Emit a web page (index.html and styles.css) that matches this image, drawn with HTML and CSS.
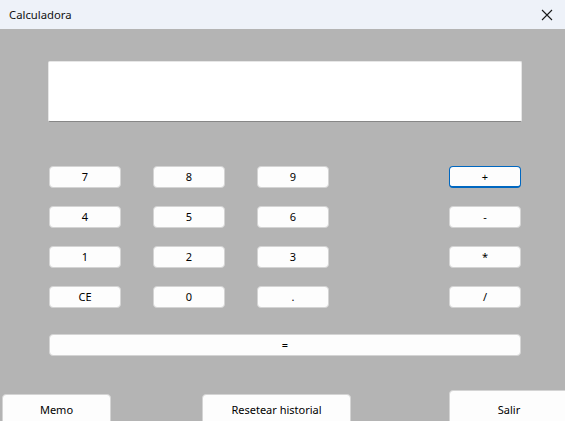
FILE: index.html
```html
<!DOCTYPE html>
<html lang="es">
<head>
<meta charset="utf-8">
<title>Calculadora</title>
<link rel="stylesheet" href="styles.css">
</head>
<body>
<div class="window">
  <header class="titlebar">
    <span class="title">Calculadora</span>
    <span class="close" aria-label="Cerrar">
      <svg width="12" height="12" viewBox="0 0 12 12"><path d="M1 1L11 11M11 1L1 11" stroke="#1a1a1a" stroke-width="1.1" fill="none"/></svg>
    </span>
  </header>
  <main class="client">
    <div class="display"></div>
    <div class="keys">
      <button class="key">7</button>
      <button class="key">8</button>
      <button class="key">9</button>
      <span class="spacer"></span>
      <button class="key focused">+</button>

      <button class="key">4</button>
      <button class="key">5</button>
      <button class="key">6</button>
      <span class="spacer"></span>
      <button class="key">-</button>

      <button class="key">1</button>
      <button class="key">2</button>
      <button class="key">3</button>
      <span class="spacer"></span>
      <button class="key">*</button>

      <button class="key">CE</button>
      <button class="key">0</button>
      <button class="key">.</button>
      <span class="spacer"></span>
      <button class="key">/</button>
    </div>
    <button class="key equals">=</button>
    <div class="bottom">
      <button class="key big memo">Memo</button>
      <button class="key big reset">Resetear historial</button>
      <button class="key big exit">Salir</button>
    </div>
  </main>
</div>
</body>
</html>
```
FILE: styles.css
```css
html, body {
  margin: 0;
  padding: 0;
  width: 565px;
  height: 421px;
  overflow: hidden;
}
body {
  font-family: "Noto Sans", "Liberation Sans", sans-serif;
  font-size: 12px;
  color: #000;
  background: #b4b4b4;
}
.window {
  display: flex;
  flex-direction: column;
  height: 421px;
}
.titlebar {
  height: 29px;
  flex: none;
  background: #eef2f9;
  display: flex;
  align-items: center;
  justify-content: space-between;
  padding: 0 12px 0 9px;
  box-sizing: border-box;
}
.title {
  font-size: 11.3px;
  color: #111;
}
.close {
  display: flex;
  width: 12px;
  height: 12px;
}
.client {
  flex: 1;
  background: #b4b4b4;
  display: flex;
  flex-direction: column;
  padding: 32px 0 0 0;
  overflow: hidden;
}
.client > * {
  flex: none;
}
.display {
  margin-left: 48px;
  width: 474px;
  height: 61px;
  box-sizing: border-box;
  background: #fff;
  border: 1px solid #e6e6e6;
  border-bottom: 1px solid #868686;
  border-radius: 2px;
}
.keys {
  margin: 44px 0 0 49px;
  display: grid;
  grid-template-columns: 72px 72px 72px 56px 72px;
  grid-auto-rows: 22px;
  column-gap: 32px;
  row-gap: 18px;
  width: 472px;
}
.key {
  font-family: "Noto Sans", "Liberation Sans", sans-serif;
  font-size: 11px;
  color: #000;
  background: #fdfdfd;
  border: 1px solid #d4d4d4;
  border-radius: 4px;
  padding: 0;
  margin: 0;
  box-sizing: border-box;
  line-height: 18px;
  text-align: center;
}
.focused {
  border: 1px solid #0067c0;
  border-bottom-width: 2px;
}
.equals {
  margin: 26px 0 0 49px;
  width: 472px;
  height: 22px;
}
.bottom {
  margin-top: 34px;
  display: flex;
  align-items: flex-start;
}
.big {
  flex: none;
  display: block;
}
.memo {
  margin: 4px 0 0 2px;
  width: 109px;
  height: 32px;
}
.reset {
  margin: 4px 0 0 91px;
  width: 149px;
  height: 32px;
}
.exit {
  margin: 0 0 0 98px;
  width: 120px;
  height: 40px;
}
```
